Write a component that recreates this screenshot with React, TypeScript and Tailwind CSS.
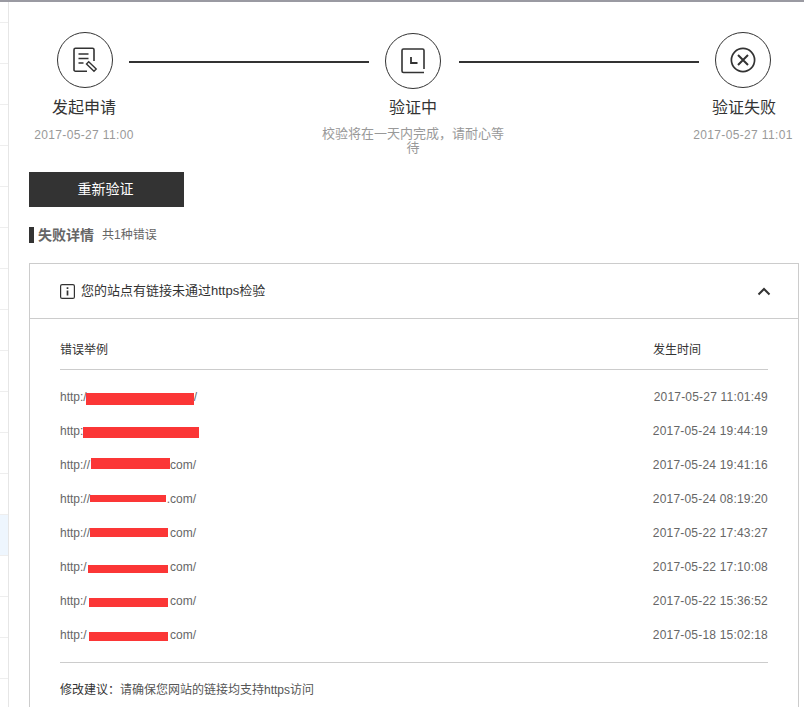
const font = "font-['Liberation_Sans','Noto_Sans_CJK_SC',sans-serif]";

const rows = [
  { pre: "http:/", left: -1, w: 108, top: 4, h: 12, post: "/", date: "2017-05-27 11:01:49" },
  { pre: "http:", left: 0, w: 116, top: 3, h: 11, post: "", date: "2017-05-24 19:44:19" },
  { pre: "http://", left: 1, w: 79, top: -3, h: 11, post: "com/", date: "2017-05-24 19:41:16" },
  { pre: "http://", left: 0, w: 76, top: -1, h: 7, post: ".com/", date: "2017-05-24 08:19:20" },
  { pre: "http://", left: 0, w: 78, top: -1, h: 9, post: "com/", date: "2017-05-22 17:43:27" },
  { pre: "http:/", left: 1, w: 80, top: 4, h: 8, post: "com/", date: "2017-05-22 17:10:08" },
  { pre: "http:/", left: 2, w: 79, top: 3, h: 9, post: "com/", date: "2017-05-22 15:36:52" },
  { pre: "http:/", left: 2, w: 79, top: 3, h: 9, post: "com/", date: "2017-05-18 15:02:18" },
];

function Circle({ children }: { children: React.ReactNode }) {
  return (
    <div className="flex h-[56px] w-[56px] shrink-0 items-center justify-center rounded-full border border-[#333]">
      {children}
    </div>
  );
}

function Sidebar() {
  const ys = Array.from({ length: 17 });
  return (
    <div className="flex w-[9px] shrink-0 flex-col border-r border-[#e6e6e6]">
      <div className="h-[21px] shrink-0 border-b border-[#eeeeee]" />
      {ys.map((_, i) => (
        <div
          key={i}
          className={i === 12 ? "h-[41px] shrink-0 border-b border-[#eeeeee] bg-[#eef6fe]" : "h-[41px] shrink-0 border-b border-[#eeeeee]"}
        />
      ))}
    </div>
  );
}

export default function App() {
  return (
    <div className={`${font} flex h-[707px] w-[804px] overflow-hidden border-t-2 border-[#9a9aa2] bg-white`}>
      <Sidebar />
      <div className="min-w-0 flex-1 pl-[20px]">
        <div className="ml-[28px] mt-[30px] flex items-start">
          <Circle>
            <svg width="26" height="26" viewBox="0 0 26 26" fill="none" stroke="#333" strokeWidth="1.6">
              <path d="M15 24.2H3.5A1.5 1.5 0 0 1 2 22.7V2.8A1.5 1.5 0 0 1 3.5 1.3h17A1.5 1.5 0 0 1 22 2.8V14" />
              <path d="M6.5 7h10M6.5 11.5h10M6.5 16h5" />
              <path d="M14.5 17l2.2-2.2 7.5 7.2-2.2 2.2z" strokeWidth="1.4" />
            </svg>
          </Circle>
          <div className="ml-[16px] mt-[29px] h-[2px] w-[240px] bg-[#333]" />
          <div className="ml-[16px] mt-[1px]">
            <Circle>
              <svg width="24" height="26" viewBox="0 0 24 26" fill="none" stroke="#333" strokeWidth="1.6">
                <path d="M23 24.5H2.5A1.5 1.5 0 0 1 1 23V2.5A1.5 1.5 0 0 1 2.5 1h19A1.5 1.5 0 0 1 23 2.5V21" />
                <path d="M10 9v6h6.5" strokeWidth="1.8" />
              </svg>
            </Circle>
          </div>
          <div className="ml-[18px] mt-[29px] h-[2px] w-[240px] bg-[#333]" />
          <div className="ml-[16px]">
            <Circle>
              <svg width="26" height="26" viewBox="0 0 26 26" fill="none" stroke="#333" strokeWidth="1.7">
                <circle cx="13" cy="13" r="11.6" />
                <path d="M8 8l10 10M18 8L8 18" strokeWidth="2" />
              </svg>
            </Circle>
          </div>
        </div>

        <div className="mt-[8px] flex">
          <div className="ml-[-5px] w-[120px] text-center">
            <div className="text-[16px] leading-[22px] text-[#333]">发起申请</div>
            <div className="mt-[8px] text-[12px] leading-[16px] tracking-[0.35px] text-[#999]">2017-05-27 11:00</div>
          </div>
          <div className="ml-[171px] w-[196px] shrink-0 text-center">
            <div className="text-[16px] leading-[22px] text-[#333]">验证中</div>
            <div className="mt-[8px] px-[6px] text-[13px] leading-[14px] text-[#999]">{"校验将在一天内完成\uFF0C请耐心等待"}</div>
          </div>
          <div className="ml-[173px] w-[120px] shrink-0 text-center">
            <div className="text-[16px] leading-[22px] text-[#333]">验证失败</div>
            <div className="mt-[8px] pr-[2px] text-[12px] leading-[16px] tracking-[0.35px] text-[#999]">2017-05-27 11:01</div>
          </div>
        </div>

        <div className="mt-[17px] flex h-[35px] w-[155px] items-center justify-center bg-[#333] pr-[2px] text-[14px] text-white">
          重新验证
        </div>

        <div className="mt-[20px] flex h-[16px] items-center">
          <div className="h-[16px] w-[5px] bg-[#333]" />
          <span className="ml-[4px] text-[14px] font-bold text-[#666]">失败详情</span>
          <span className="ml-[8px] text-[12px] text-[#666]">共1种错误</span>
        </div>

        <div className="mt-[20px] w-[770px] border border-b-0 border-[#ccc]">
          <div className="flex h-[55px] items-center border-b border-[#ccc] pl-[30px] pr-[27px]">
            <svg width="15" height="15" viewBox="0 0 15 15" fill="none" stroke="#333" strokeWidth="1.2">
              <rect x="0.6" y="0.6" width="13.8" height="13.8" rx="1.5" />
              <path d="M7.5 3.2v1.8M7.5 6.4v5" strokeWidth="1.7" />
            </svg>
            <span className="ml-[6px] text-[13px] text-[#333]">您的站点有链接未通过https检验</span>
            <svg className="ml-auto" width="14" height="9" viewBox="0 0 14 9" fill="none" stroke="#333" strokeWidth="2">
              <path d="M1.5 7.5L7 2l5.5 5.5" />
            </svg>
          </div>

          <div className="mx-[30px] h-[391px]">
            <div className="flex h-[51px] items-center border-b border-[#ccc] pt-[11px] text-[12px] text-[#333]">
              <span>错误举例</span>
              <span className="ml-auto w-[115px]">发生时间</span>
            </div>
            <div className="border-b border-[#ccc] pb-[10px] pt-[10px]">
              {rows.map((r) => (
                <div key={r.date} className="flex h-[34px] items-center justify-between text-[12px] text-[#666]">
                  <div className="flex w-[136px] items-center">
                    <span>{r.pre}</span>
                    <span
                      className="shrink-0 bg-[#fb3636]"
                      style={{ marginLeft: r.left, width: r.w, height: r.h, marginTop: r.top }}
                    />
                    <span className="ml-auto">{r.post}</span>
                  </div>
                  <span className="tracking-[0.2px]">{r.date}</span>
                </div>
              ))}
            </div>
            <div className="mt-[18px] text-[12px] text-[#333]">
              <span>{"修改建议\uFF1A"}</span>
              <span className="text-[#555]">请确保您网站的链接均支持https访问</span>
            </div>
          </div>
        </div>
      </div>
    </div>
  );
}
